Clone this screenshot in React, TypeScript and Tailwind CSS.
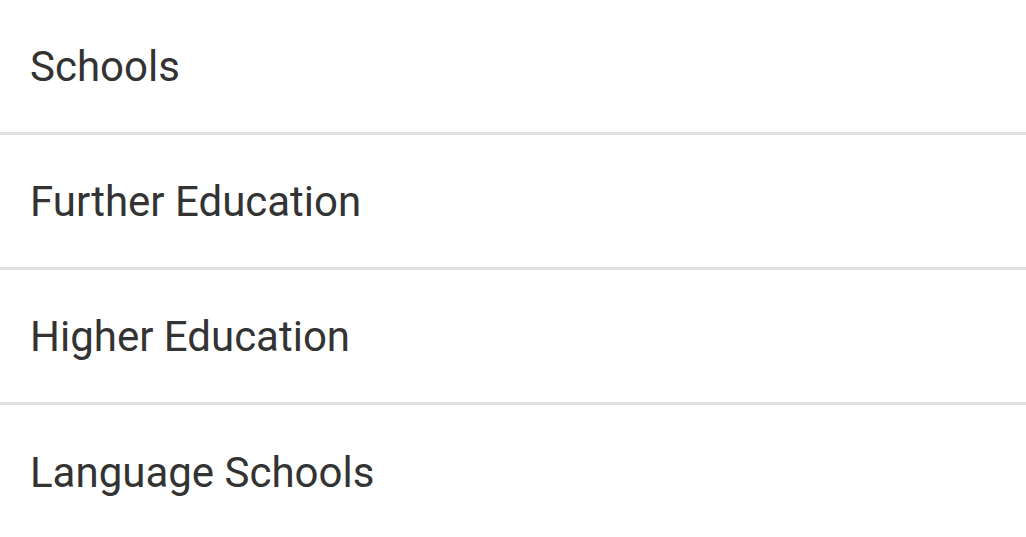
export default function App() {
  const items = ["Schools", "Further Education", "Higher Education", "Language Schools"];
  return (
    <div className="w-[1026px] h-[537px] bg-white overflow-hidden" style={{ fontFamily: "Roboto, sans-serif" }}>
      {items.map((t, i) => (
        <div
          key={t}
          className={`h-[135px] flex items-center pl-[30px] text-[42px] text-[#333333] ${i < 3 ? "pt-[2px] border-b-[3px] border-[#e0e0e0]" : ""}`}
        >
          <span className="leading-none">{t}</span>
        </div>
      ))}
    </div>
  );
}
